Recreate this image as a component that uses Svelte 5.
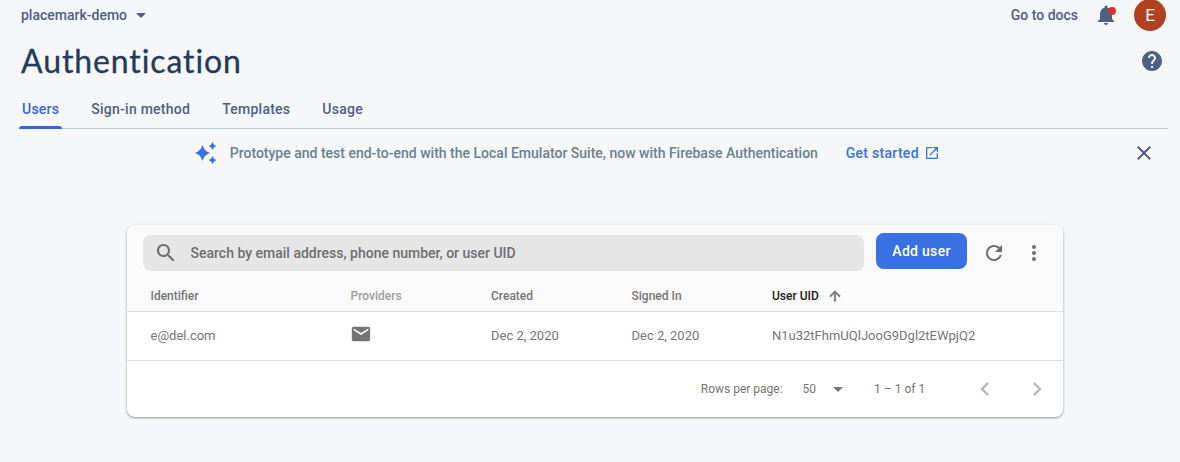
<script>
  const tabs = ['Users', 'Sign-in method', 'Templates', 'Usage'];
  const activeTab = 'Users';
  const user = {
    identifier: 'e@del.com',
    created: 'Dec 2, 2020',
    signedIn: 'Dec 2, 2020',
    uid: 'N1u32tFhmUQlJooG9Dgl2tEWpjQ2'
  };
</script>

<main>
  <header>
    <button class="project"><span>placemark-demo</span>
      <svg width="10" height="5" viewBox="0 0 10 5"><path d="M0 0h10L5 5z" /></svg>
    </button>
    <div class="actions">
      <a class="docs" href="#docs">Go to docs</a>
      <button class="bell" aria-label="Notifications">
        <svg width="24" height="24" viewBox="0 0 24 24"><path d="M12 22c1.100 0 2-.9 2-2h-4c0 1.100.89 2 2 2zm6-6v-5c0-3.070-1.640-5.640-4.500-6.320V4c0-.83-.67-1.500-1.500-1.500s-1.500.67-1.500 1.500v.68C7.630 5.360 6 7.920 6 11v5l-2 2v1h16v-1l-2-2z" /><circle cx="18" cy="8" r="4" fill="#c73a36" /></svg>
      </button>
      <div class="avatar">E</div>
    </div>
  </header>

  <div class="title-row">
    <h1>Authentication</h1>
    <svg width="24" height="24" viewBox="0 0 24 24"><path d="M12 2C6.480 2 2 6.480 2 12s4.480 10 10 10 10-4.480 10-10S17.520 2 12 2zm1 17h-2v-2h2v2zm2.070-7.750l-.9.920C13.450 12.900 13 13.500 13 15h-2v-.5c0-1.100.45-2.100 1.170-2.830l1.240-1.260c.37-.36.59-.86.59-1.410 0-1.100-.9-2-2-2s-2 .9-2 2H8c0-2.210 1.790-4 4-4s4 1.790 4 4c0 .88-.36 1.680-.93 2.250z" /></svg>
  </div>

  <nav>
    {#each tabs as tab}
      <button class="tab" class:active={tab === activeTab}><span>{tab}</span></button>
    {/each}
  </nav>

  <section class="banner">
    <svg class="spark" width="24" height="24" viewBox="0 0 24 24"><path d="M10.500 4Q12.200 10.300 18 12Q12.200 13.700 10.500 20Q8.800 13.700 3 12Q8.800 10.300 10.500 4z" /><path d="M20.500 1Q21.400 4.100 24.500 5Q21.400 5.900 20.500 9Q19.600 5.900 16.500 5Q19.600 4.100 20.500 1zM20.500 15Q21.400 18.100 24.500 19Q21.400 19.900 20.500 23Q19.600 19.900 16.500 19Q19.600 18.100 20.500 15z" /></svg>
    <span class="message">Prototype and test end-to-end with the Local Emulator Suite, now with Firebase Authentication</span>
    <a class="start" href="#start"><span>Get started</span>
      <svg width="16" height="16" viewBox="0 0 24 24"><path d="M19 19H5V5h7V3H5c-1.110 0-2 .9-2 2v14c0 1.100.89 2 2 2h14c1.100 0 2-.9 2-2v-7h-2v7zM14 3v2h3.590l-9.830 9.830 1.410 1.410L19 6.410V10h2V3h-7z" /></svg>
    </a>
    <button class="close" aria-label="Dismiss">
      <svg width="24" height="24" viewBox="0 0 24 24"><path d="M19 6.410L17.590 5 12 10.590 6.410 5 5 6.410 10.590 12 5 17.590 6.410 19 12 13.410 17.590 19 19 17.590 13.410 12z" /></svg>
    </button>
  </section>

  <section class="card">
    <div class="toolbar">
      <div class="search">
        <svg width="24" height="24" viewBox="0 0 24 24"><path d="M15.500 14h-.79l-.28-.27C15.410 12.590 16 11.110 16 9.500 16 5.910 13.090 3 9.500 3S3 5.910 3 9.500 5.910 16 9.500 16c1.610 0 3.090-.59 4.230-1.570l.27.28v.79l5 4.990L20.490 19l-4.990-5zm-6 0C7.010 14 5 11.990 5 9.500S7.010 5 9.500 5 14 7.010 14 9.500 11.990 14 9.500 14z" /></svg>
        <span>Search by email address, phone number, or user UID</span>
      </div>
      <button class="add">Add user</button>
      <svg class="refresh" width="24" height="24" viewBox="0 0 24 24"><path d="M17.650 6.350C16.200 4.900 14.210 4 12 4c-4.420 0-7.990 3.580-7.990 8s3.570 8 7.990 8c3.730 0 6.840-2.550 7.730-6h-2.080c-.82 2.330-3.040 4-5.650 4-3.310 0-6-2.690-6-6s2.690-6 6-6c1.660 0 3.140.69 4.220 1.780L13 11h7V4l-2.350 2.350z" /></svg>
      <svg width="24" height="24" viewBox="0 0 24 24"><path d="M12 8c1.100 0 2-.9 2-2s-.9-2-2-2-2 .9-2 2 .9 2 2 2zm0 2c-1.100 0-2 .9-2 2s.9 2 2 2 2-.9 2-2-.9-2-2-2zm0 6c-1.100 0-2 .9-2 2s.9 2 2 2 2-.9 2-2-.9-2-2-2z" /></svg>
    </div>

    <div class="row head">
      <span>Identifier</span>
      <span class="muted">Providers</span>
      <span>Created</span>
      <span>Signed In</span>
      <span class="sorted"><b>User UID</b>
        <svg width="16" height="16" viewBox="0 0 24 24"><path d="M4 12l1.410 1.410L11 7.830V20h2V7.830l5.580 5.590L20 12l-8-8-8 8z" stroke="currentColor" stroke-width="1" /></svg>
      </span>
    </div>
    <div class="row body">
      <span>{user.identifier}</span>
      <span class="mail"><svg width="22" height="22" viewBox="0 0 24 24"><path d="M20 4H4c-1.100 0-1.990.9-1.990 2L2 18c0 1.100.9 2 2 2h16c1.100 0 2-.9 2-2V6c0-1.100-.9-2-2-2zm0 4l-8 5-8-5V6l8 5 8-5v2z" /></svg></span>
      <span>{user.created}</span>
      <span>{user.signedIn}</span>
      <span>{user.uid}</span>
    </div>

    <footer>
      <span>Rows per page:</span>
      <span class="size">50</span>
      <svg class="caret" width="10" height="5" viewBox="0 0 10 5"><path d="M0 0h10L5 5z" /></svg>
      <span class="range">1 – 1 of 1</span>
      <svg class="prev" width="28" height="28" viewBox="0 0 24 24"><path d="M15.410 7.410L14 6l-6 6 6 6 1.410-1.410L10.830 12z" /></svg>
      <svg width="28" height="28" viewBox="0 0 24 24"><path d="M10 6L8.590 7.410 13.170 12l-4.580 4.590L10 18l6-6z" /></svg>
    </footer>
  </section>
</main>

<style>
  :global(body) { background: #f6f7f9; }
  main {
    box-sizing: border-box;
    width: 1180px;
    height: 462px;
    overflow: hidden;
    background: #f6f7f9;
    color: #4e6182;
    font: 500 14px/20px Roboto, sans-serif;
  }
  button { border: 0; padding: 0; background: none; color: inherit; font: inherit; letter-spacing: inherit; }
  a { color: inherit; text-decoration: none; }
  svg { display: block; flex: none; fill: currentColor; overflow: visible; }
  span { white-space: nowrap; }

  header { display: flex; justify-content: space-between; align-items: center; height: 30px; padding: 0 14px 0 21px; }
  .project { display: flex; align-items: center; gap: 9px; }
  .actions { display: flex; align-items: center; }
  .docs { margin-right: 16px; }
  .bell { margin-right: 16px; }
  .avatar {
    display: grid; place-items: center; width: 32px; height: 32px; flex: none;
    border-radius: 50%; background: #b04020; color: #fff; font-size: 17px; font-weight: 400;
  }

  .title-row { display: flex; align-items: center; justify-content: space-between; height: 62px; padding: 0 16px 0 21px; }
  h1 { margin: 0; color: #233a5c; font: 400 32px/40px Lato, sans-serif; letter-spacing: 0.9px; -webkit-text-stroke: 0.3px #233a5c; }

  nav { display: flex; gap: 26px; box-sizing: border-box; height: 37px; margin: 0 12px 0 19px; border-bottom: 1px solid #bcc8dc; }
  .tab { display: flex; flex-direction: column; height: 37px; padding: 7px 3px 0; letter-spacing: 0.25px; }
  .tab.active { color: #3367d6; }
  .tab.active::after { content: ''; height: 3px; margin: 7px -3px 0; border-radius: 3px 3px 0 0; background: #3367d6; }

  .banner { display: flex; align-items: center; height: 48px; padding: 0 24px 0 192px; }
  .spark { color: #3871e0; }
  .message { margin-left: 13.75px; color: #6b818e; }
  .start { display: flex; align-items: center; gap: 5px; margin-left: 27.75px; color: #3871e0; letter-spacing: 0.3px; }
  .close { margin-left: auto; }

  .card {
    width: 936px; height: 192px; margin: 48px 0 0 127px; overflow: hidden;
    border-radius: 8px; background: #fff; color: #757575;
    box-shadow: 0 1px 3px rgba(0, 0, 0, .22), 0 1px 2px rgba(0, 0, 0, .22);
  }
  .toolbar { display: flex; align-items: center; height: 56px; padding: 0 16.5px 0 16px; background: #fafafa; color: #6e6e6e; }
  .search { display: flex; align-items: center; gap: 12.5px; box-sizing: border-box; width: 721px; height: 36px; padding-left: 11px; border-radius: 8px; background: #e6e6e6; }
  .add { width: 91px; height: 36px; margin: -4px 15.4px 0 12px; border-radius: 8px; background: #3871e0; color: #fff; letter-spacing: 0.3px; }
  .refresh { margin-right: 16px; }

  .row {
    display: grid; grid-template-columns: 200px 140.5px 140.5px 140.5px 1fr; align-items: center;
    box-sizing: border-box; padding-left: 23.5px; border-bottom: 1px solid #dedede;
  }
  .head { height: 31px; background: #fafafa; font-size: 12px; }
  .muted { color: #9e9e9e; }
  .sorted { display: flex; align-items: center; gap: 8px; }
  .sorted b { color: #212121; font-weight: 500; }
  .body { height: 49px; font-size: 13px; font-weight: 400; }
  .mail { margin-left: -1px; padding-bottom: 4px; }

  footer { display: flex; align-items: center; height: 56px; padding: 0 12px 0 573.75px; font-size: 12px; font-weight: 400; }
  .size { margin-left: 20px; }
  .caret { margin-left: 17px; }
  .range { margin-left: 31px; }
  footer svg:not(.caret) { color: #b8b8b8; }
  .prev { margin: 0 24px 0 auto; }
</style>
